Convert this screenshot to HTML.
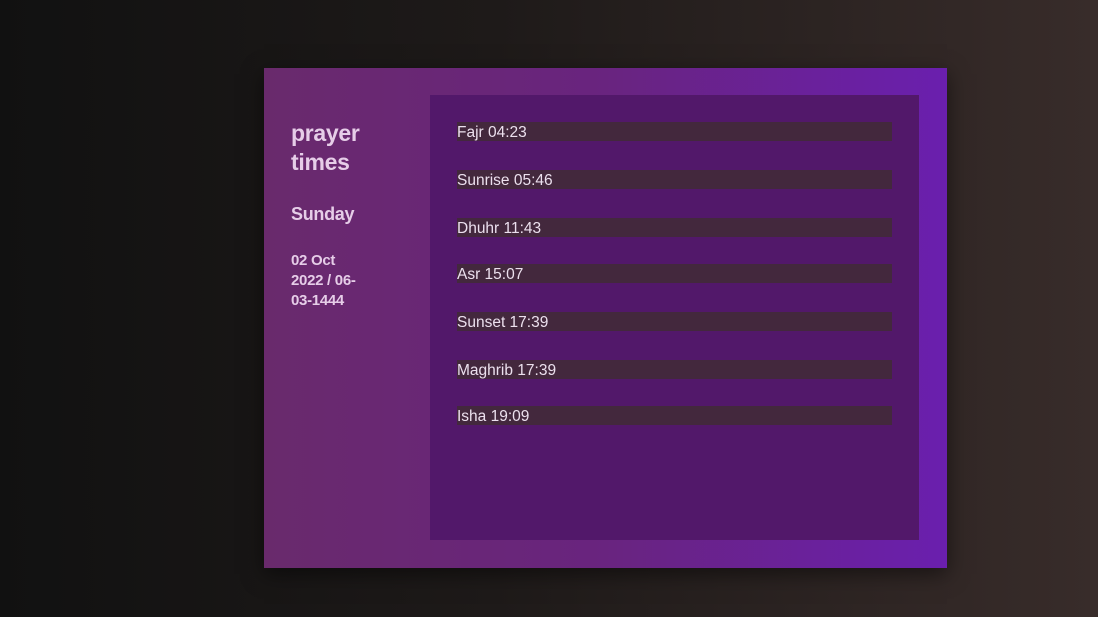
<!DOCTYPE html>
<html><head><style>
html,body{margin:0;width:1098px;height:617px;overflow:hidden}
body{background:linear-gradient(90deg,#111 0%,#1e1a19 45%,#382c2a 100%);font-family:"Liberation Sans",sans-serif;position:relative}
.card{position:absolute;left:264px;top:68px;width:683px;height:500px;background:linear-gradient(90deg,#692a6c 0%,#69247f 50%,#6a1fae 100%);box-shadow:0 6px 20px rgba(0,0,0,.5)}
.left{position:absolute;left:27px;top:51px;color:#e6cde8;font-weight:bold;width:110px}
h1{font-size:23px;line-height:29px;margin:0;letter-spacing:-0.3px}
.day{font-size:18px;margin-top:27px;letter-spacing:-0.3px}
.date{font-size:15px;line-height:20px;margin-top:26px;letter-spacing:-0.3px}
.inner{position:absolute;left:166px;top:27px;width:489px;height:445px;background:#52186a}
.row{position:absolute;left:27px;width:435px;height:19px;background:#43283d;color:#ece0ee;font-size:15.5px;line-height:22px}
</style></head><body>
<div class="card">
<div class="left"><h1>prayer<br>times</h1><div class="day">Sunday</div><div class="date">02 Oct<br>2022 / 06-<br>03-1444</div></div>
<div class="inner">
<div class="row" style="top:27px">Fajr 04:23</div>
<div class="row" style="top:75px">Sunrise 05:46</div>
<div class="row" style="top:123px">Dhuhr 11:43</div>
<div class="row" style="top:169px">Asr 15:07</div>
<div class="row" style="top:217px">Sunset 17:39</div>
<div class="row" style="top:265px">Maghrib 17:39</div>
<div class="row" style="top:311px">Isha 19:09</div>
</div></div>
</body></html>
